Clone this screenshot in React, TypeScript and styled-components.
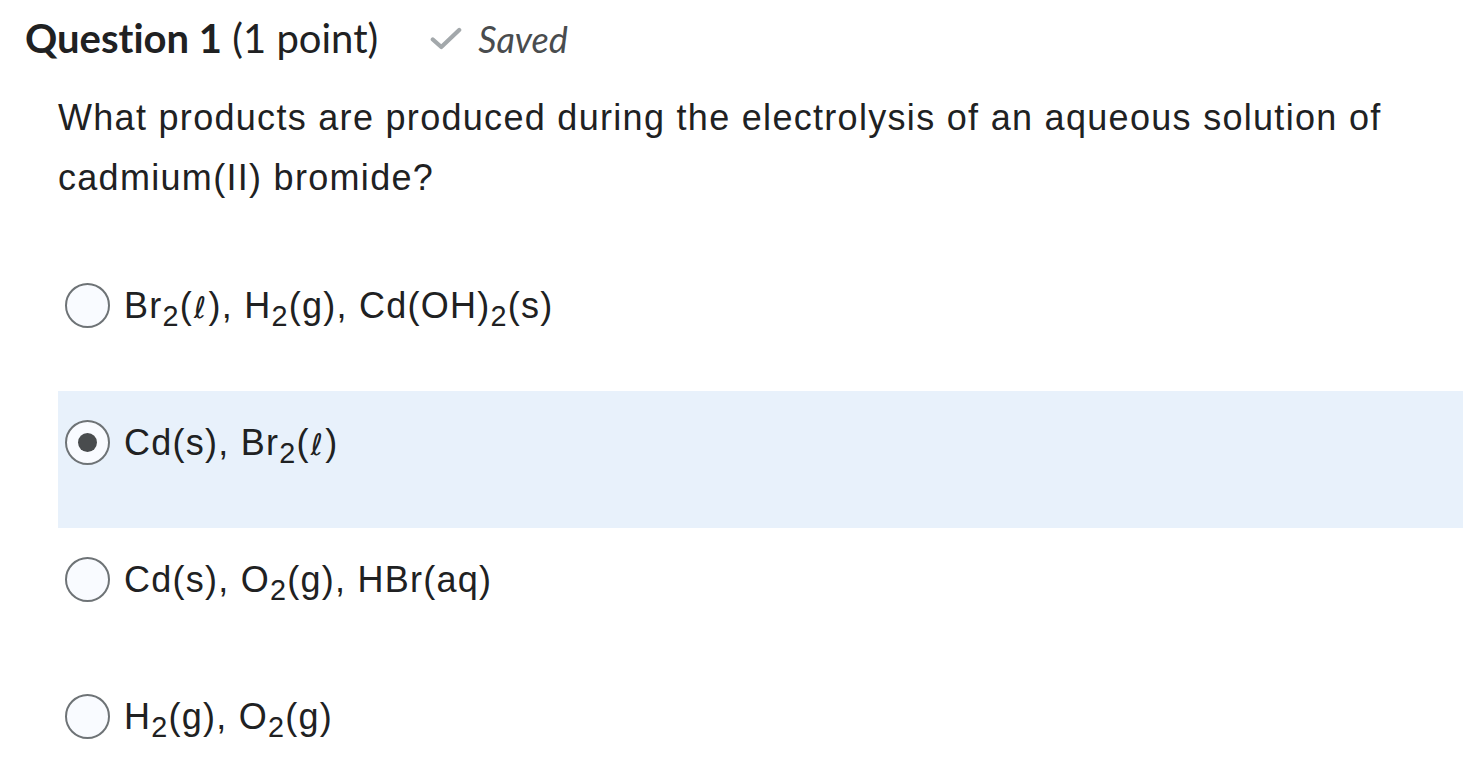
import React from "react";
import styled, { createGlobalStyle } from "styled-components";

const Global = createGlobalStyle`
  html, body { margin: 0; padding: 0; background: #ffffff; }
  body { font-family: "Liberation Sans", Arial, sans-serif; color: #202122; }
`;

const Page = styled.div`
  display: flex;
  flex-direction: column;
`;

const Header = styled.div`
  display: flex;
  align-items: baseline;
  padding: 14px 0 0 25px;
  height: 60px;
  box-sizing: border-box;
  font-family: Lato, "Liberation Sans", sans-serif;
  font-variant-ligatures: none;
`;

const Title = styled.h2`
  margin: 0;
  font-size: 40px;
  font-weight: 400;
  color: #202122;
  line-height: 48px;
  b { font-weight: 700; }
`;

const Saved = styled.span`
  display: inline-flex;
  align-items: baseline;
  gap: 16px;
  margin-left: 52px;
  font-size: 36px;
  font-style: italic;
  color: #494c4e;
  svg { align-self: center; }
`;

const QuestionText = styled.p`
  margin: 28px 0 0 58px;
  font-size: 36px;
  letter-spacing: 1.3px;
  line-height: 60px;
  color: #202122;
  max-width: 1390px;
`;

const Options = styled.div`
  display: flex;
  flex-direction: column;
  margin: 46px 0 0 58px;
`;

const OptionRow = styled.label<{ $selected?: boolean }>`
  display: flex;
  align-items: flex-start;
  gap: 14px;
  height: 137px;
  box-sizing: border-box;
  padding: 29px 0 0 7px;
  background: ${(p) => (p.$selected ? "#e8f1fb" : "transparent")};
`;

const Radio = styled.span<{ $checked?: boolean }>`
  flex: none;
  width: 45px;
  height: 45px;
  box-sizing: border-box;
  border-radius: 50%;
  border: 2.5px solid #6e7376;
  background: #f9fbff;
  display: flex;
  align-items: center;
  justify-content: center;
  &::after {
    content: "";
    display: ${(p) => (p.$checked ? "block" : "none")};
    width: 19px;
    height: 19px;
    border-radius: 50%;
    background: #494c4e;
  }
`;

const OptionText = styled.span`
  font-size: 36px;
  letter-spacing: 1.25px;
  line-height: 45px;
  color: #202122;
  sub {
    font-size: 0.8em;
    line-height: 0;
    vertical-align: -0.28em;
  }
`;

const Ell = styled.span`
  font-family: "DejaVu Sans", sans-serif;
  font-size: 0.82em;
  padding: 0 1px;
`;

const L = () => <Ell>ℓ</Ell>;

const Check = () => (
  <svg width="32" height="26" viewBox="0 0 34 26" aria-hidden="true">
    <path d="M3 13.5 L12 21.5 L31 3.5" fill="none" stroke="#a3a8ab" strokeWidth="4.5" strokeLinecap="round" strokeLinejoin="round" />
  </svg>
);

const options: { key: string; selected?: boolean; content: React.ReactNode }[] = [
  {
    key: "a",
    content: (
      <>
        Br<sub>2</sub>(<L />), H<sub>2</sub>(g), Cd(OH)<sub>2</sub>(s)
      </>
    ),
  },
  {
    key: "b",
    selected: true,
    content: (
      <>
        Cd(s), Br<sub>2</sub>(<L />)
      </>
    ),
  },
  {
    key: "c",
    content: (
      <>
        Cd(s), O<sub>2</sub>(g), HBr(aq)
      </>
    ),
  },
  {
    key: "d",
    content: (
      <>
        H<sub>2</sub>(g), O<sub>2</sub>(g)
      </>
    ),
  },
];

export default function App() {
  return (
    <Page>
      <Global />
      <Header>
        <Title>
          <b>Question 1</b> (1 point)
        </Title>
        <Saved>
          <Check />
          Saved
        </Saved>
      </Header>
      <QuestionText>
        What products are produced during the electrolysis of an aqueous solution of cadmium(II) bromide?
      </QuestionText>
      <Options>
        {options.map((o) => (
          <OptionRow key={o.key} $selected={o.selected}>
            <Radio $checked={o.selected} />
            <OptionText>{o.content}</OptionText>
          </OptionRow>
        ))}
      </Options>
    </Page>
  );
}
